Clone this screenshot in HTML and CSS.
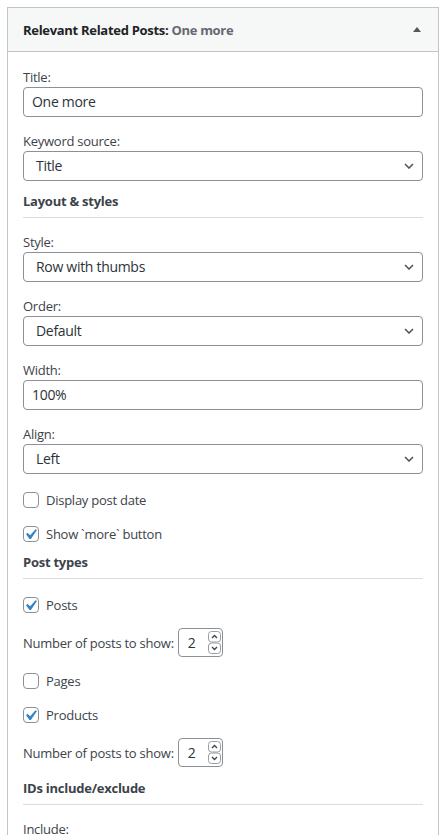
FILE: index.html
```html
<!DOCTYPE html>
<html lang="en">
<head>
<meta charset="utf-8">
<title>Relevant Related Posts widget</title>
<link rel="stylesheet" href="styles.css">
</head>
<body>
<div class="widget">
  <div class="widget-top">
    <h3 class="widget-title">Relevant Related Posts:<span class="in-title"> One more</span></h3>
    <svg class="toggle" width="8" height="5" viewBox="0 0 8 5"><polygon points="4,0 8,5 0,5" fill="#50575e"/></svg>
  </div>
  <div class="widget-inside">
    <div class="field">
      <label class="label">Title:</label>
      <div class="input">One more</div>
    </div>
    <div class="field">
      <label class="label">Keyword source:</label>
      <div class="select"><span>Title</span><svg class="chev" width="10" height="6" viewBox="0 0 10 6"><polyline points="1,1 5,5 9,1"/></svg></div>
    </div>
    <h4 class="heading">Layout &amp; styles</h4>
    <div class="field">
      <label class="label">Style:</label>
      <div class="select"><span>Row with thumbs</span><svg class="chev" width="10" height="6" viewBox="0 0 10 6"><polyline points="1,1 5,5 9,1"/></svg></div>
    </div>
    <div class="field">
      <label class="label">Order:</label>
      <div class="select"><span>Default</span><svg class="chev" width="10" height="6" viewBox="0 0 10 6"><polyline points="1,1 5,5 9,1"/></svg></div>
    </div>
    <div class="field">
      <label class="label">Width:</label>
      <div class="input">100%</div>
    </div>
    <div class="field">
      <label class="label">Align:</label>
      <div class="select"><span>Left</span><svg class="chev" width="10" height="6" viewBox="0 0 10 6"><polyline points="1,1 5,5 9,1"/></svg></div>
    </div>
    <div class="check"><span class="box"></span><span>Display post date</span></div>
    <div class="check"><span class="box"><svg width="14" height="14" viewBox="3.81 2.86 13.33 13.33"><path d="M14.83 4.89l1.34.94-5.81 8.38H9.02L5.78 9.670l1.34-1.25 2.57 2.4z"/></svg></span><span>Show `more` button</span></div>
    <h4 class="heading">Post types</h4>
    <div class="check"><span class="box"><svg width="14" height="14" viewBox="3.81 2.86 13.33 13.33"><path d="M14.83 4.89l1.34.94-5.81 8.38H9.02L5.78 9.67l1.34-1.25 2.57 2.4z"/></svg></span><span>Posts</span></div>
    <div class="number"><span>Number of posts to show:</span><div class="num-input"><span>2</span><svg class="spin" width="13" height="23" viewBox="0 0 13 23"><rect x="0.5" y="0.5" width="12" height="10.5" rx="3"/><rect x="0.5" y="12" width="12" height="10.5" rx="3"/><polyline class="arr" points="4,7 6.5,4.5 9,7"/><polyline class="arr" points="4,16 6.5,18.5 9,16"/></svg></div></div>
    <div class="check"><span class="box"></span><span>Pages</span></div>
    <div class="check"><span class="box"><svg width="14" height="14" viewBox="3.81 2.86 13.33 13.33"><path d="M14.83 4.89l1.34.94-5.81 8.38H9.02L5.78 9.67l1.34-1.25 2.57 2.4z"/></svg></span><span>Products</span></div>
    <div class="number"><span>Number of posts to show:</span><div class="num-input"><span>2</span><svg class="spin" width="13" height="23" viewBox="0 0 13 23"><rect x="0.5" y="0.5" width="12" height="10.5" rx="3"/><rect x="0.5" y="12" width="12" height="10.5" rx="3"/><polyline class="arr" points="4,7 6.5,4.5 9,7"/><polyline class="arr" points="4,16 6.5,18.5 9,16"/></svg></div></div>
    <h4 class="heading">IDs include/exclude</h4>
    <div class="field">
      <label class="label">Include:</label>
      <div class="input"></div>
    </div>
  </div>
</div>
</body>
</html>
```
FILE: styles.css
```css
html, body {
  margin: 0;
  padding: 0;
  background: #ffffff;
}
body {
  font-family: "Open Sans", "Noto Sans", sans-serif;
  font-size: 13px;
  letter-spacing: -0.25px;
  color: #3c434a;
}
.widget {
  margin: 7px 3px 0 7px;
  border: 1px solid #c3c4c7;
  background: #ffffff;
}
.widget-top {
  height: 43px;
  background: #f6f7f7;
  border-bottom: 1px solid #c3c4c7;
  display: flex;
  align-items: center;
  justify-content: space-between;
  padding: 0 17px 0 15px;
}
.widget-title {
  margin: 0;
  font-size: 13px;
  font-weight: 700;
  color: #1d2327;
  line-height: 18px;
  letter-spacing: -0.3px;
}
.in-title {
  color: #646970;
}
.toggle {
  display: block;
}
.widget-inside {
  padding: 16px 15px 15px;
  display: flex;
  flex-direction: column;
}
.label {
  display: block;
  line-height: 18px;
  margin-bottom: 1px;
}
.input,
.select {
  box-sizing: border-box;
  height: 30px;
  border: 1px solid #8c8f94;
  border-radius: 4px;
  font-size: 14px;
  letter-spacing: -0.3px;
  line-height: 28px;
  color: #2c3338;
  background: #ffffff;
}
.input {
  padding: 0 8px;
}
.select {
  padding: 0 8px 0 12px;
  display: flex;
  align-items: center;
  justify-content: space-between;
}
.chev polyline {
  fill: none;
  stroke: #50575e;
  stroke-width: 1.6;
}
.heading {
  margin: 0;
  font-size: 13px;
  font-weight: 700;
  color: #3c434a;
  line-height: 18px;
  padding-bottom: 7px;
  border-bottom: 1px solid #dcdcde;
}
.check {
  display: flex;
  align-items: center;
  gap: 7px;
  height: 18px;
  line-height: 18px;
}
.box {
  box-sizing: border-box;
  width: 16px;
  height: 16px;
  border: 1px solid #8c8f94;
  border-radius: 4px;
  background: #ffffff;
  display: flex;
}
.box svg {
  display: block;
  fill: #3582c4;
}
.number {
  display: flex;
  align-items: center;
  gap: 4px;
}
.num-input {
  box-sizing: border-box;
  width: 45px;
  height: 29px;
  border: 1px solid #8c8f94;
  border-radius: 4px;
  display: flex;
  align-items: center;
  justify-content: space-between;
  padding: 0 1px 0 9px;
  font-size: 14px;
  color: #2c3338;
}
.spin rect {
  fill: #ffffff;
  stroke: #9a9ca0;
  stroke-width: 1;
}
.spin .arr {
  fill: none;
  stroke: #3c434a;
  stroke-width: 1.3;
}
.field + .field,
.heading + .field { margin-top: 15px; }
.field + .heading { margin-top: 11px; }
.field + .check { margin-top: 17px; }
.check + .check { margin-top: 16px; }
.check + .heading { margin-top: 10px; }
.heading + .check { margin-top: 17px; }
.check + .number { margin-top: 14px; }
.number + .check { margin-top: 15px; }
.number + .heading { margin-top: 12px; }
```
